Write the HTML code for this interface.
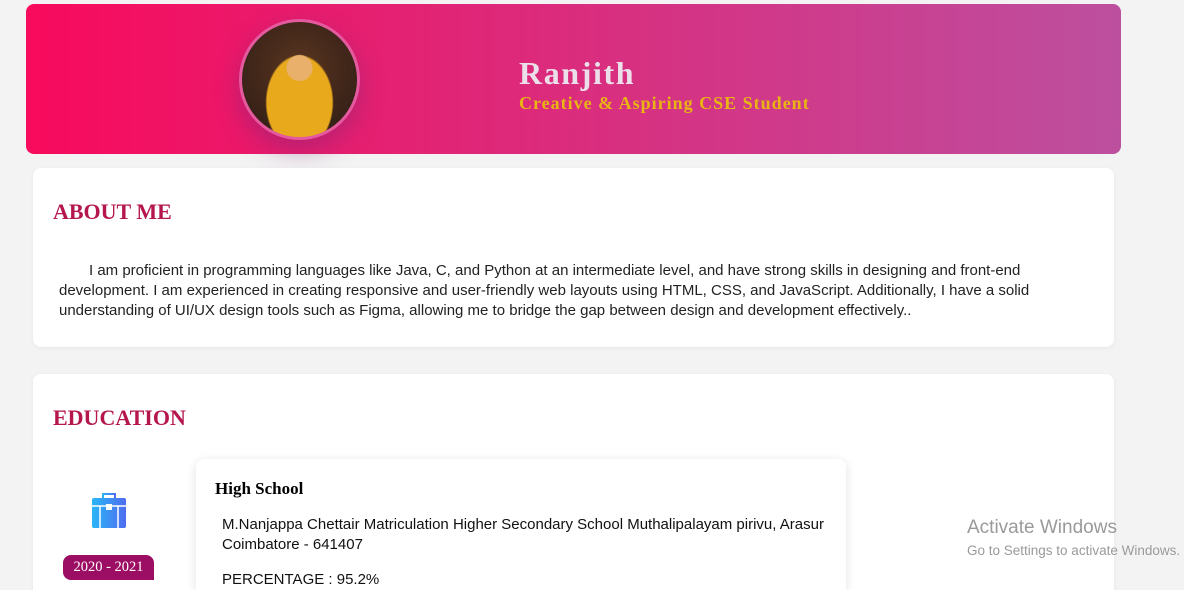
<!DOCTYPE html>
<html><head><style>
*{margin:0;padding:0;box-sizing:border-box}
html,body{width:1184px;height:590px;overflow:hidden}
body{background:#f3f3f3;position:relative;font-family:"Liberation Sans",sans-serif}
.hdr{position:absolute;left:26px;top:4px;width:1095px;height:150px;border-radius:8px;background:linear-gradient(90deg,#f80a5c,#bd4f9f)}
.av{position:absolute;left:239px;top:19px;width:121px;height:121px;border-radius:50%;border:3px solid #e45a9e;box-shadow:0 10px 25px rgba(120,40,120,.45);background:radial-gradient(circle at 50% 40%,#e8b06a 0 14%,transparent 15%),radial-gradient(ellipse at 50% 70%,#e9a91c 0 40%,transparent 42%),radial-gradient(circle at 50% 40%,#5a3520,#2a1a14)}
.name{position:absolute;left:519px;top:55px;font-family:"Liberation Serif",serif;font-weight:bold;font-size:32px;letter-spacing:1.6px;color:#ebe0ea}
.sub{position:absolute;left:519px;top:93px;font-family:"Liberation Serif",serif;font-weight:bold;font-size:18px;letter-spacing:1px;color:#e8b512}
.card{position:absolute;left:33px;width:1081px;background:#fff;border-radius:8px;box-shadow:0 1px 4px rgba(0,0,0,.06)}
h2{position:absolute;left:20px;font-family:"Liberation Serif",serif;font-weight:bold;font-size:22px;color:#b5164e}
.p{position:absolute;left:26px;top:93px;width:990px;font-size:15px;line-height:20px;color:#222;text-indent:30px}
.inner{position:absolute;left:163px;top:85px;width:650px;height:131px;background:#fff;border-radius:8px 8px 0 0;box-shadow:0 2px 10px rgba(0,0,0,.12)}
.badge{position:absolute;left:30px;top:181px;width:91px;height:25px;background:#9c0e63;color:#fff;font-family:"Liberation Serif",serif;font-size:14.5px;text-align:center;line-height:25px;border-radius:8px 8px 0 8px}
.aw{position:absolute;left:967px;top:517px;color:#9a9a9a;font-size:19px;white-space:nowrap}
.aw2{position:absolute;left:967px;top:543px;color:#9a9a9a;font-size:13.5px;white-space:nowrap}
</style></head><body>
<div class="hdr"></div>
<div class="av"></div>
<div class="name">Ranjith</div>
<div class="sub">Creative &amp; Aspiring CSE Student</div>
<div class="card" style="top:168px;height:179px">
<h2 style="top:31px">ABOUT ME</h2>
<div class="p">I am proficient in programming languages like Java, C, and Python at an intermediate level, and have strong skills in designing and front-end development. I am experienced in creating responsive and user-friendly web layouts using HTML, CSS, and JavaScript. Additionally, I have a solid understanding of UI/UX design tools such as Figma, allowing me to bridge the gap between design and development effectively..</div>
</div>
<div class="card" style="top:374px;height:216px;border-radius:8px 8px 0 0">
<h2 style="top:31px">EDUCATION</h2>
<svg style="position:absolute;left:58px;top:118px" width="36" height="38" viewBox="0 0 36 38"><defs><linearGradient id="g" x1="0" x2="1"><stop offset="0" stop-color="#29b6f6"/><stop offset="1" stop-color="#4f6cf0"/></linearGradient></defs><path d="M12 6V2h12v4" fill="none" stroke="url(#g)" stroke-width="2"/><rect x="1" y="6" width="34" height="30" rx="2" fill="url(#g)"/><path d="M1 14h34" stroke="#fff" stroke-width="1.5"/><rect x="15" y="12" width="6" height="6" fill="#fff"/><path d="M9 14v22M27 14v22" stroke="#fff" stroke-width="1.5"/></svg>
<div class="badge">2020 - 2021</div>
<div class="inner">
<div style="position:absolute;left:19px;top:20px;font-family:'Liberation Serif',serif;font-weight:bold;font-size:17px">High School</div>
<div style="position:absolute;left:26px;top:56px;width:615px;font-size:15px;line-height:20px;color:#111">M.Nanjappa Chettair Matriculation Higher Secondary School Muthalipalayam pirivu, Arasur Coimbatore - 641407</div>
<div style="position:absolute;left:26px;top:112px;font-size:15px;line-height:18px;color:#111">PERCENTAGE : 95.2%</div>
</div>
</div>
<div class="aw">Activate Windows</div>
<div class="aw2">Go to Settings to activate Windows.</div>
</body></html>
